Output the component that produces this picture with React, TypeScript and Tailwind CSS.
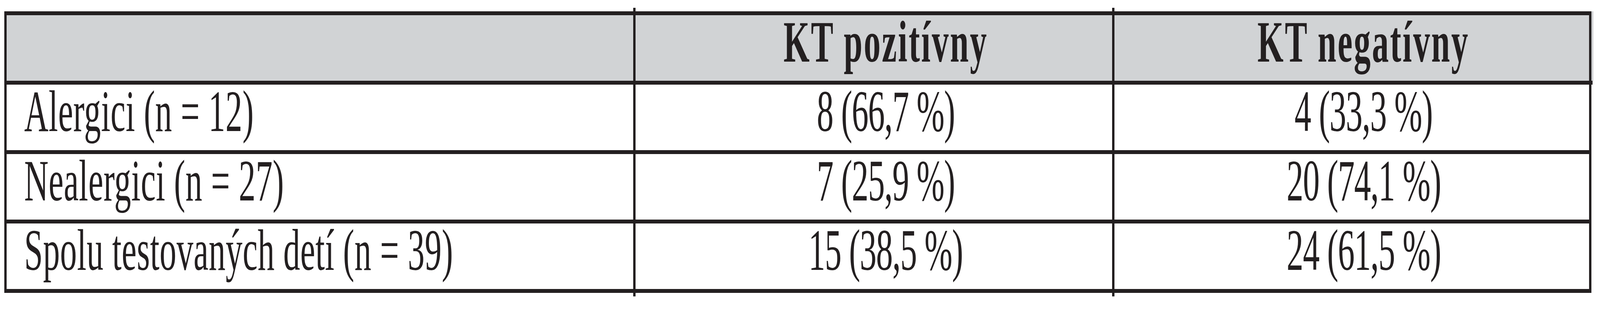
import React from "react";

const rows: [string, string, string][] = [
  ["Alergici (n = 12)", "8 (66,7 %)", "4 (33,3 %)"],
  ["Nealergici (n = 27)", "7 (25,9 %)", "20 (74,1 %)"],
  ["Spolu testovaných detí (n = 39)", "15 (38,5 %)", "24 (61,5 %)"],
];

function useScale() {
  const get = () => (typeof window !== "undefined" ? window.innerWidth / 7160 : 1);
  const [k, setK] = React.useState(get);
  React.useEffect(() => {
    const on = () => setK(get());
    window.addEventListener("resize", on);
    return () => window.removeEventListener("resize", on);
  }, []);
  return k;
}

function Ticks() {
  return (
    <div className="flex h-[9px] w-full">
      <div className="w-[39.581%] shrink-0" />
      <div className="w-[0.1397%] shrink-0 bg-[#231f20]" />
      <div className="w-[29.791%] shrink-0" />
      <div className="w-[0.1397%] shrink-0 bg-[#231f20]" />
    </div>
  );
}

function HBorder({ extra, wide }: { extra?: boolean; wide?: boolean }) {
  return (
    <div className="flex h-[10px] w-full">
      <div className="w-[0.2654%] shrink-0" />
      <div className={(wide ? "w-[99.274%]" : "w-[99.19%]") + " shrink-0 bg-[#231f20]"} />
      {extra ? <div className="w-[0.1257%] shrink-0 bg-[#d1d3d5]" /> : null}
    </div>
  );
}

function Txt({ k, children, origin }: { k: number; children: React.ReactNode; origin: "left" | "center" }) {
  return (
    <span
      className="inline-block whitespace-nowrap"
      style={{ transform: `scaleX(${k})`, transformOrigin: origin === "left" ? "left center" : "center center" }}
    >
      {children}
    </span>
  );
}

export default function App() {
  const k = useScale();
  return (
    <div
      className="w-full h-[800px] overflow-hidden bg-white pt-[20px] text-[#231f20] text-[150px] leading-[136px]"
      style={{ fontFamily: '"Liberation Serif", "Times New Roman", serif' }}
    >
      <Ticks />
      <HBorder extra />
      <div className="flex h-[168px] w-full">
        <div className="w-[0.2654%] shrink-0" />
        <div className="w-[0.1397%] shrink-0 bg-[#231f20]" />
        <div className="w-[39.176%] shrink-0 min-w-0 bg-[#d1d3d5]" />
        <div className="w-[0.1397%] shrink-0 bg-[#231f20]" />
        <div className="w-[29.791%] shrink-0 min-w-0 bg-[#d1d3d5] pl-[1.48%] text-center font-bold tracking-[6px]">
          <Txt k={k} origin="center">KT pozitívny</Txt>
        </div>
        <div className="w-[0.1397%] shrink-0 bg-[#231f20]" />
        <div className="w-[29.665%] shrink-0 min-w-0 bg-[#d1d3d5] pl-[1.48%] text-center font-bold tracking-[6px]">
          <Txt k={k} origin="center">KT negatívny</Txt>
        </div>
        <div className="w-[0.1397%] shrink-0 bg-[#231f20]" />
        <div className="w-[0.1257%] shrink-0 bg-[#d1d3d5]" />
      </div>
      <HBorder wide />
      {rows.map((r, i) => (
        <React.Fragment key={i}>
          <div className="flex h-[168px] w-full">
            <div className="w-[0.2654%] shrink-0" />
            <div className="w-[0.1397%] shrink-0 bg-[#231f20]" />
            <div className="w-[39.176%] shrink-0 min-w-0 pl-[1.117%] tracking-[1px]">
              <Txt k={k} origin="left">{r[0]}</Txt>
            </div>
            <div className="w-[0.1397%] shrink-0 bg-[#231f20]" />
            <div className="w-[29.791%] shrink-0 min-w-0 pl-[1.48%] text-center tracking-[-2px]">
              <Txt k={k} origin="center">{r[1]}</Txt>
            </div>
            <div className="w-[0.1397%] shrink-0 bg-[#231f20]" />
            <div className="w-[29.665%] shrink-0 min-w-0 pl-[1.48%] text-center tracking-[-2px]">
              <Txt k={k} origin="center">{r[2]}</Txt>
            </div>
            <div className="w-[0.1397%] shrink-0 bg-[#231f20]" />
          </div>
          <HBorder />
        </React.Fragment>
      ))}
      <Ticks />
    </div>
  );
}
